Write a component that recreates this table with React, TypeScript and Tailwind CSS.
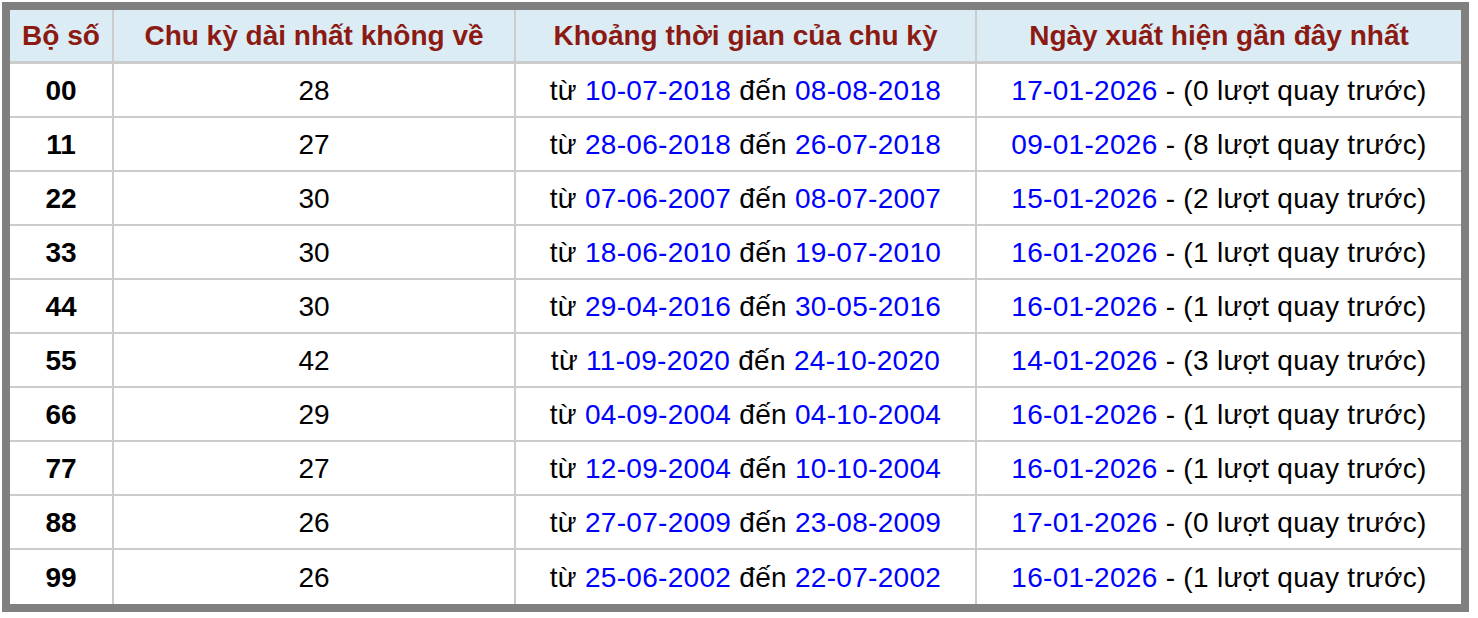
const rows = [
  { num: "00", len: 28, from: "10-07-2018", to: "08-08-2018", last: "17-01-2026", ago: 0 },
  { num: "11", len: 27, from: "28-06-2018", to: "26-07-2018", last: "09-01-2026", ago: 8 },
  { num: "22", len: 30, from: "07-06-2007", to: "08-07-2007", last: "15-01-2026", ago: 2 },
  { num: "33", len: 30, from: "18-06-2010", to: "19-07-2010", last: "16-01-2026", ago: 1 },
  { num: "44", len: 30, from: "29-04-2016", to: "30-05-2016", last: "16-01-2026", ago: 1 },
  { num: "55", len: 42, from: "11-09-2020", to: "24-10-2020", last: "14-01-2026", ago: 3 },
  { num: "66", len: 29, from: "04-09-2004", to: "04-10-2004", last: "16-01-2026", ago: 1 },
  { num: "77", len: 27, from: "12-09-2004", to: "10-10-2004", last: "16-01-2026", ago: 1 },
  { num: "88", len: 26, from: "27-07-2009", to: "23-08-2009", last: "17-01-2026", ago: 0 },
  { num: "99", len: 26, from: "25-06-2002", to: "22-07-2002", last: "16-01-2026", ago: 1 },
];

const headers = [
  "Bộ số",
  "Chu kỳ dài nhất không về",
  "Khoảng thời gian của chu kỳ",
  "Ngày xuất hiện gần đây nhất",
];

export default function App() {
  return (
    <div className="min-h-screen bg-white pl-[2px] pt-[2px] font-['Liberation_Sans',Arial,sans-serif] text-[28px] text-black">
      <div className="w-[1467px] border-8 border-[#808080] bg-[#cccccc]">
        <div className="grid grid-cols-[102px_400px_459px_484px] gap-x-[2px]">
          {headers.map((h) => (
            <div
              key={h}
              className="mb-[3px] flex h-[51px] items-center justify-center bg-[#dcecf5] pt-[1px] font-bold text-[#8b1a13]"
            >
              {h}
            </div>
          ))}
          {rows.map((r, i) => {
            const h = i === rows.length - 1 ? "h-[54px]" : "mb-[2px] h-[52px]";
            return (
              <div key={r.num} className="contents">
                <div className={`flex ${h} items-center justify-center bg-white pt-[2px] font-bold`}>
                  {r.num}
                </div>
                <div className={`flex ${h} items-center justify-center bg-white pt-[2px]`}>
                  {r.len}
                </div>
                <div className={`flex ${h} items-center justify-center whitespace-pre bg-white pt-[2px] tracking-[0.3px]`}>
                  {"từ "}
                  <span className="text-[#0000ff]">{r.from}</span>
                  {" đến "}
                  <span className="text-[#0000ff]">{r.to}</span>
                </div>
                <div className={`flex ${h} items-center justify-center whitespace-pre bg-white pt-[2px] tracking-[0.3px]`}>
                  <span className="text-[#0000ff]">{r.last}</span>
                  {` - (${r.ago} lượt quay trước)`}
                </div>
              </div>
            );
          })}
        </div>
      </div>
    </div>
  );
}
